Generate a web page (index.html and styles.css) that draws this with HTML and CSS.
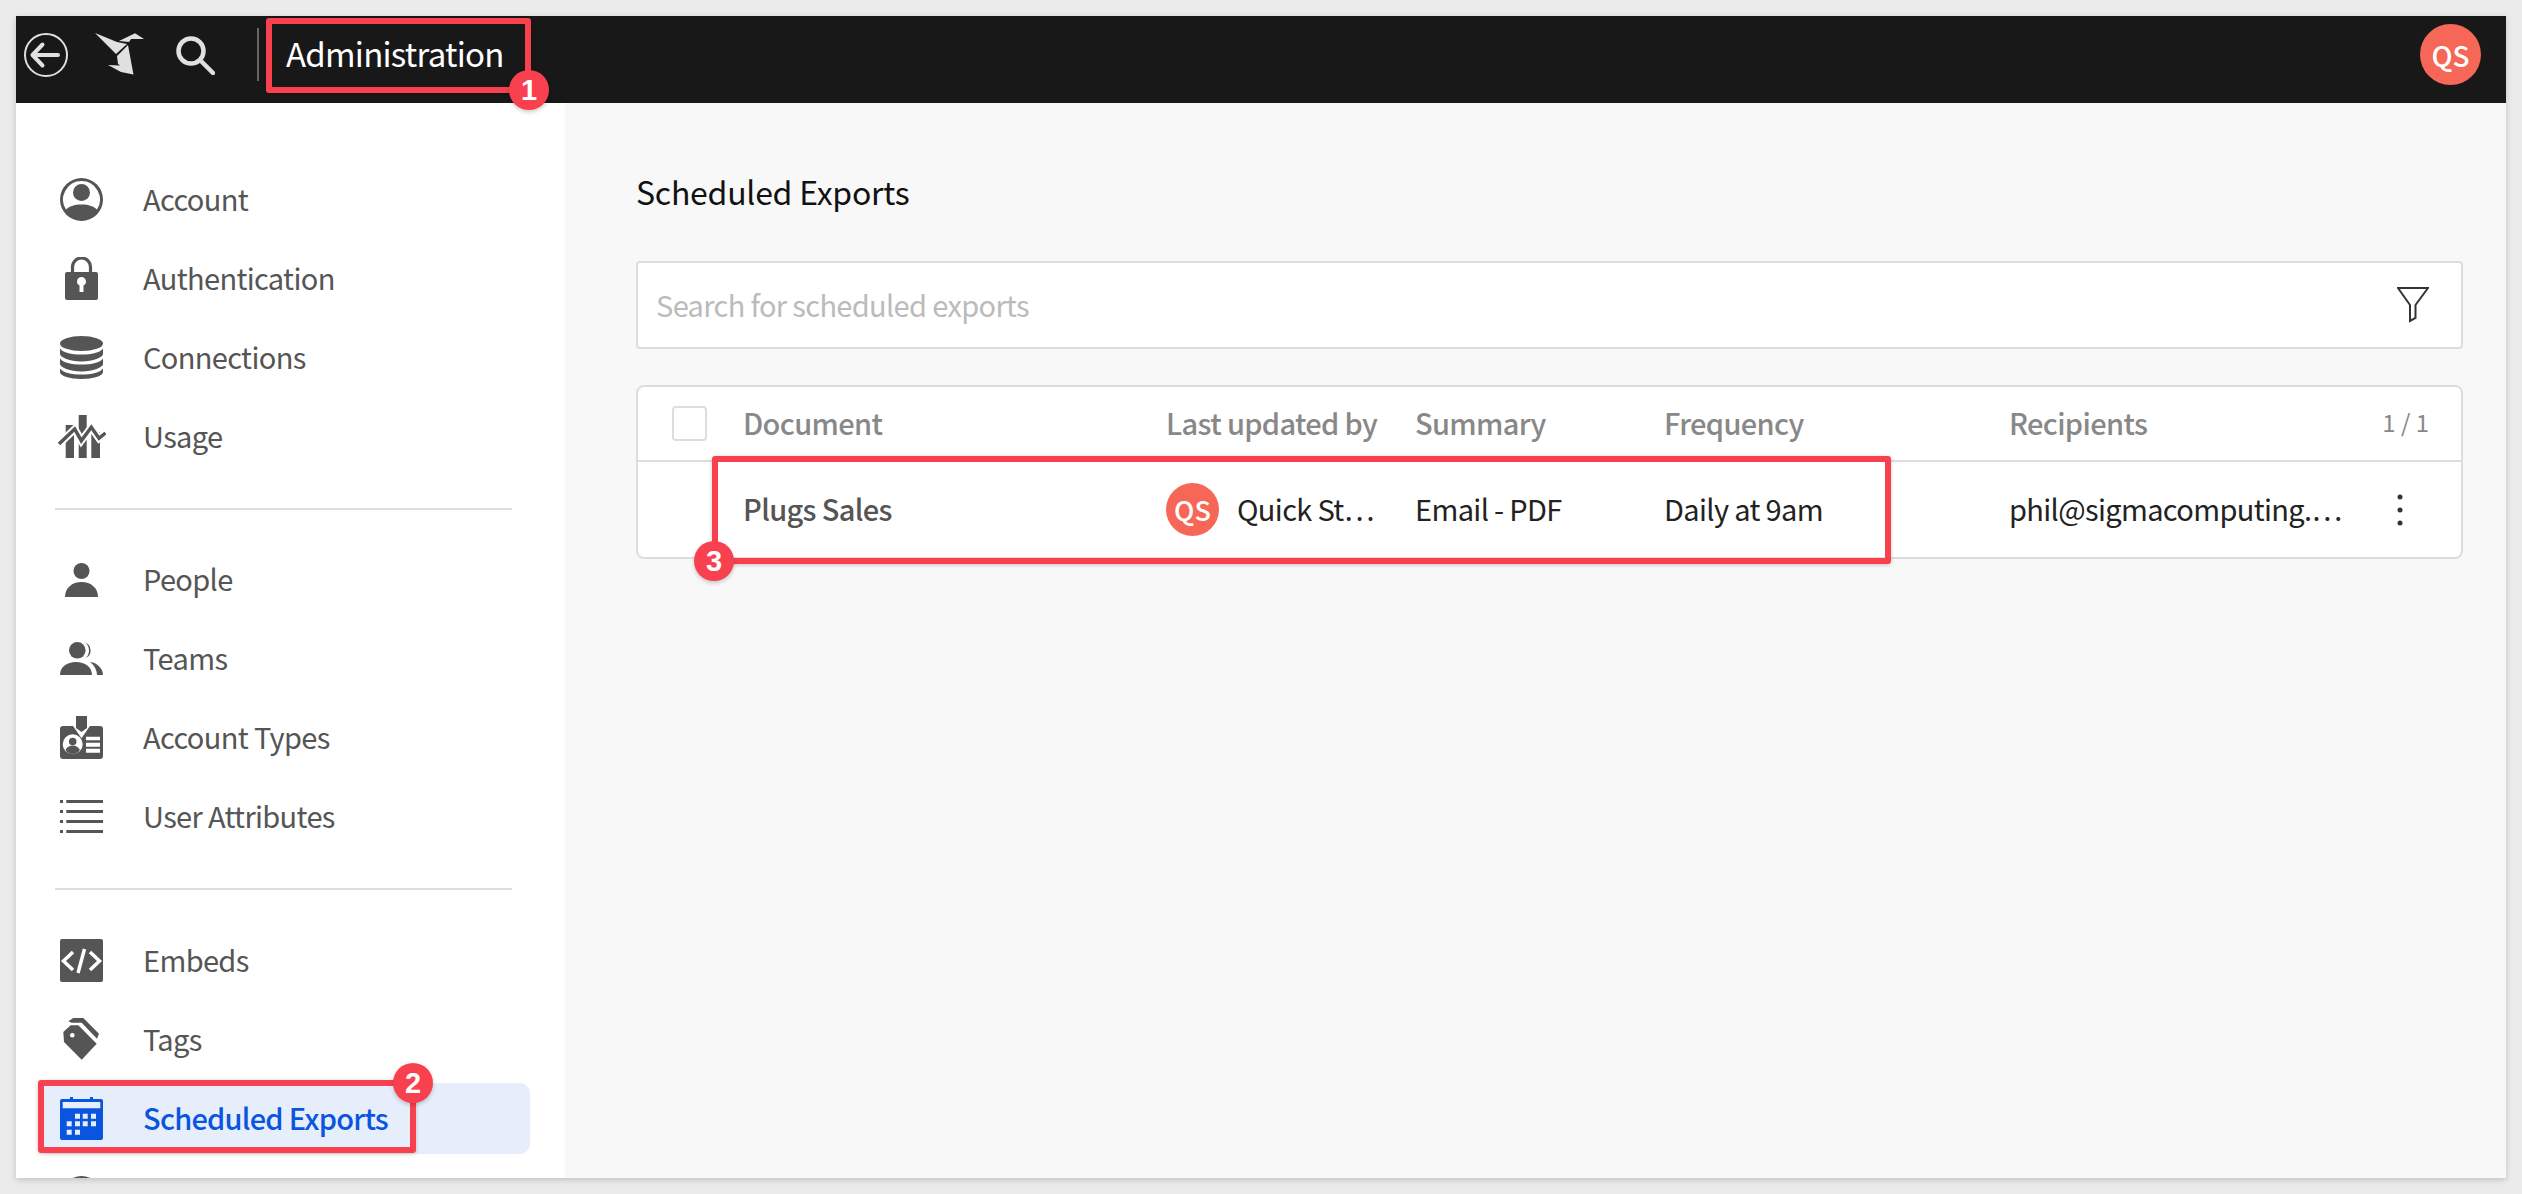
FILE: index.html
```html
<!DOCTYPE html>
<html lang="en">
<head>
<meta charset="utf-8">
<title>Scheduled Exports</title>
<link rel="stylesheet" href="styles.css">
</head>
<body>
<div class="window">
  <header class="topbar">
    <svg class="ico-back" viewBox="0 0 44 44"><circle cx="22" cy="22" r="21"/><path d="M34 22H9M18.500 11.500L8.500 22l10 10.500"/></svg>
    <svg class="ico-logo" viewBox="0 0 49 43"><path d="M0 0l22 9 10 2-11 10zM24 8L40 .3 34 9zM40 .3L49 6H36zM22 23l11-11 5.500 29.700L23 31zM13 32l18 .7 7.300 8.800L26 39z"/></svg>
    <svg class="ico-search" viewBox="0 0 39 40"><circle cx="15" cy="16" r="12.500"/><path d="M25 26l12 12"/></svg>
    <span class="sep"></span>
    <span class="apptitle">Administration</span>
    <span class="avatar avatar-top">QS</span>
  </header>
  <div class="body">
    <nav class="sidebar">
      <ul class="group">
        <li class="item"><svg class="ico" viewBox="0 0 43 43"><path fill-rule="evenodd" d="M21.500 0a21.500 21.500 0 1 0 0 43a21.500 21.500 0 1 0 0-43zM21.500 3a18.500 18.500 0 0 1 15.500 28.500c-3-3-8-5-15.500-5s-12.500 2-15.500 5a18.500 18.500 0 0 1 15.500-28.500z"/><circle cx="21.500" cy="14.500" r="8.500"/></svg><span>Account</span></li>
        <li class="item"><svg class="ico" viewBox="0 0 43 43"><path class="shackle" d="M12.500 16V10a9 9 0 0 1 18 0v6"/><path fill-rule="evenodd" d="M7 15h29a2 2 0 0 1 2 2v24a2 2 0 0 1-2 2H7a2 2 0 0 1-2-2V17a2 2 0 0 1 2-2zM21.500 20a4.500 4.500 0 0 0-2 8.500V35h4v-6.500a4.500 4.500 0 0 0-2-8.500z"/></svg><span>Authentication</span></li>
        <li class="item"><svg class="ico" viewBox="0 0 43 43"><ellipse cx="21.500" cy="7.500" rx="21.500" ry="7.500"/><path d="M0 12.500c3 4 11 6 21.500 6s18.500-2 21.500-6V18c0 3-10 7.500-21.500 7.500S0 21 0 18zM0 22.500c3 4 11 6 21.500 6s18.500-2 21.500-6V28c0 3-10 7.500-21.500 7.500S0 31 0 28zM0 32.500c3 4 11 6 21.500 6s18.500-2 21.500-6V36c0 4-10 7-21.500 7S0 40 0 36z"/></svg><span>Connections</span></li>
        <li class="item"><svg class="ico ico-wide" viewBox="0 0 48 43"><path d="M7.700 10H16v33H7.700zM20.700 0h8v43h-8zM33.300 17H42v26h-8.700z"/><path class="halo" d="M1 29L16.700 14l6.600 11.700 10-13.400L41 23.300 47.500 18"/><path class="line" d="M1 29L16.700 14l6.600 11.700 10-13.400L41 23.300 47.500 18"/></svg><span>Usage</span></li>
      </ul>
      <hr class="rule">
      <ul class="group">
        <li class="item"><svg class="ico ico-people" viewBox="0 0 43 34"><circle cx="21.500" cy="8" r="8"/><path d="M5 34c0-9 7-15 16.500-15S38 25 38 34z"/></svg><span>People</span></li>
        <li class="item"><svg class="ico ico-teams" viewBox="0 0 43 33"><circle cx="17.300" cy="8.300" r="8.300"/><path d="M0 33C0 25 7 20 16 20s16 5 16 13zM25 .5a8.500 8.500 0 0 1 1 15.500c2-2 3-5 3-7.500s-1-6-4-8zM30 20c8 1 13 7 13 13h-6c0-5-3-10-7-13z"/></svg><span>Teams</span></li>
        <li class="item"><svg class="ico" viewBox="0 0 43 43"><path fill-rule="evenodd" d="M3 10h37a3 3 0 0 1 3 3v27a3 3 0 0 1-3 3H3a3 3 0 0 1-3-3V13a3 3 0 0 1 3-3zM26 20.700v3.600h14v-3.600zM26 26.700v4h14v-4zM26 32.700v4h14v-4zM12.700 18.300a10 10 0 1 0 0 20a10 10 0 1 0 0-20z"/><circle cx="12.700" cy="25.500" r="3.800"/><path d="M5.500 34c1.500-3 4-4.500 7.200-4.500s5.700 1.500 7.200 4.500a8.500 8.500 0 0 1-14.400 0z"/><path class="halo-thin" d="M14 6l7.500 11L29 6"/><path d="M16 0h11v12l-5.500 4-5.500-4z"/></svg><span>Account Types</span></li>
        <li class="item"><svg class="ico ico-list" viewBox="0 0 43 33"><path d="M0 0h3v3H0zM6.300 0H43v3H6.300zM0 10h3v3H0zM6.300 10H43v3H6.300zM0 20h3v3H0zM6.300 20H43v3H6.300zM0 30h3v3H0zM6.300 30H43v3H6.300z"/></svg><span>User Attributes</span></li>
      </ul>
      <hr class="rule rule-2">
      <ul class="group">
        <li class="item"><svg class="ico" viewBox="0 0 43 43"><path d="M2 0h39a2 2 0 0 1 2 2v39a2 2 0 0 1-2 2H2a2 2 0 0 1-2-2V2a2 2 0 0 1 2-2z"/><path class="cut" d="M13 13l-9.500 9 9.500 9M30 13l9.500 9-9.500 9M24.500 10L18 34"/></svg><span>Embeds</span></li>
        <li class="item"><svg class="ico" viewBox="0 0 43 43"><path fill-rule="evenodd" d="M3.300 14l7.400-6.700h7.600l18.400 18.400-15 16L4 24zM12.300 15a2.300 2.300 0 1 0 0 4.600a2.300 2.300 0 1 0 0-4.600z"/><path d="M8.300 3.300L13.300 0h10L39 15.700l-2 5L21.700 4.700h-10z"/></svg><span>Tags</span></li>
        <li class="item item-active"><svg class="ico" viewBox="0 0 43 43"><path fill-rule="evenodd" d="M2 2h8V0h3v2h17V0h3v2h8a2 2 0 0 1 2 2v37a2 2 0 0 1-2 2H2a2 2 0 0 1-2-2V4a2 2 0 0 1 2-2zM2.700 5v6.300h37.600V5zM15 16.700v5h5v-5zM22.700 16.700v5h5v-5zM31 16.700v5h5v-5zM6.700 24.300v5h5v-5zM15 24.300v5h5v-5zM22.700 24.300v5h5v-5zM31 24.300v5h5v-5zM6.700 32.700v5h5v-5zM15 32.700v5h5v-5z"/></svg><span>Scheduled Exports</span></li>
        <li class="item"><svg class="ico" viewBox="0 0 43 43"><circle cx="21.500" cy="21.500" r="21.500"/></svg><span></span></li>
      </ul>
    </nav>
    <main class="main">
      <h1 class="title">Scheduled Exports</h1>
      <div class="search">
        <span class="placeholder">Search for scheduled exports</span>
        <svg class="ico-filter" viewBox="0 0 32 36"><path d="M1 1h30L18.500 18v13L13 34V18z"/></svg>
      </div>
      <section class="table">
        <div class="row row-head">
          <span class="check"></span>
          <span>Document</span>
          <span>Last updated by</span>
          <span>Summary</span>
          <span>Frequency</span>
          <span>Recipients</span>
          <span class="count">1 / 1</span>
        </div>
        <div class="row row-body">
          <span></span>
          <span class="docname">Plugs Sales</span>
          <span class="updater"><span class="avatar avatar-row">QS</span><span>Quick St…</span></span>
          <span>Email - PDF</span>
          <span>Daily at 9am</span>
          <span>phil@sigmacomputing.…</span>
          <svg class="ico-kebab" viewBox="0 0 6 32"><circle cx="3" cy="3" r="2.500"/><circle cx="3" cy="16" r="2.500"/><circle cx="3" cy="29" r="2.500"/></svg>
        </div>
      </section>
    </main>
  </div>
</div>
<div class="mark mark-1"></div>
<div class="mark mark-2"></div>
<div class="mark mark-3"></div>
<span class="badge badge-1">1</span>
<span class="badge badge-2">2</span>
<span class="badge badge-3">3</span>
</body>
</html>
```
FILE: styles.css
```css
* { box-sizing: border-box; }
html, body { margin: 0; height: 100%; }
body {
  position: relative;
  padding: 16px;
  height: 1194px;
  overflow: hidden;
  background: #ebebeb;
  font-family: "Noto Sans CJK SC", "Source Sans Pro", "Open Sans", sans-serif;
  font-size: 29px;
  letter-spacing: -0.65px;
  line-height: 40px;
  color: #222;
}
.window {
  display: flex;
  flex-direction: column;
  height: 1162px;
  background: #f8f8f8;
  box-shadow: 0 2px 6px rgba(0,0,0,.18);
  overflow: hidden;
}
.topbar {
  flex: none;
  display: flex;
  align-items: center;
  height: 87px;
  padding: 0 25px 10px 8px;
  background: #181818;
  color: #fff;
}
.ico-back { flex: none; width: 44px; height: 44px; fill: none; stroke: #e0e0e0; stroke-width: 2; }
.ico-back path { stroke-width: 4; stroke-linecap: round; stroke-linejoin: round; }
.ico-logo { flex: none; width: 49px; height: 43px; margin-left: 27px; fill: #e0e0e0; }
.ico-search { flex: none; width: 39px; height: 40px; margin-left: 32px; fill: none; stroke: #e0e0e0; stroke-width: 4.5; stroke-linecap: round; }
.sep { width: 2px; height: 53px; margin-left: 42px; background: #666; }
.apptitle { margin-left: 27px; padding-bottom: 3px; font-size: 33px; letter-spacing: -0.75px; }
.avatar {
  display: flex;
  align-items: center;
  justify-content: center;
  flex: none;
  border-radius: 50%;
  background: #f76757;
  color: #fff;
  letter-spacing: 0;
  font-weight: 500;
}
.avatar-top { width: 61px; height: 61px; margin-left: auto; font-size: 28px; }
.body { flex: 1; display: flex; min-height: 0; }
.sidebar {
  flex: none;
  width: 549px;
  padding: 57px 35px 0 22px;
  background: #fff;
  overflow: hidden;
}
.group { margin: 0; padding: 0; list-style: none; }
.item {
  display: flex;
  align-items: center;
  height: 79px;
  padding-left: 22px;
  border-radius: 10px;
  color: #555;
}
.item span { margin-left: 40px; padding-bottom: 3px; }
.ico { flex: none; width: 43px; height: 43px; fill: #555; }
.ico-wide { width: 48px; margin: 0 -2.5px; }
.ico-people { height: 34px; }
.ico-teams { height: 33px; }
.ico-list { height: 33px; }
.line { fill: none; stroke: #555; stroke-width: 3.5; }
.halo { fill: none; stroke: #fff; stroke-width: 7.5; }
.halo-thin { fill: none; stroke: #fff; stroke-width: 6; }
.cut { fill: none; stroke: #fff; stroke-width: 3.5; }
.shackle { fill: none; stroke: #555; stroke-width: 3.2; }
.item-active { height: 71px; margin: 4px 0; background: #e6eefb; color: #0a55e0; font-weight: 500; letter-spacing: -0.75px; }
.item-active .ico { fill: #0a55e0; }
.rule { height: 2px; margin: 32px 18px 30px 17px; border: 0; background: #ddd; }
.rule-2 { margin-top: 32px; margin-bottom: 31px; }
.main { flex: 1; min-width: 0; padding: 68px 43px 0 71px; }
.title { margin: 0 0 50px; font-size: 32px; letter-spacing: -0.25px; font-weight: 400; line-height: 40px; color: #111; }
.search {
  display: flex;
  align-items: center;
  justify-content: space-between;
  height: 88px;
  padding: 0 32px 0 18px;
  background: #fff;
  border: 2px solid #ddd;
  border-radius: 4px;
}
.placeholder { padding-bottom: 3px; color: #bbb; }
.ico-filter { width: 32px; height: 36px; fill: none; stroke: #333; stroke-width: 2; }
.table {
  margin-top: 36px;
  background: #fff;
  border: 2px solid #ddd;
  border-radius: 8px;
}
.row {
  display: grid;
  grid-template-columns: 105px 423px 249px 249px 345px 1fr;
  align-items: center;
}
.row-head { position: relative; height: 75px; border-bottom: 2px solid #ddd; color: #888; font-weight: 500; }
.row-head > span { padding-bottom: 3px; }
.row-body { position: relative; height: 95px; }
.row-body > span { padding-bottom: 4px; }
.row-head > .check {
  justify-self: start;
  width: 35px;
  height: 35px;
  margin-left: 34px;
  padding: 0;
  border: 2px solid #ddd;
  border-radius: 4px;
}
.row-head > .count { position: absolute; right: 32px; font-size: 24px; font-weight: 400; letter-spacing: 0; color: #888; }
.docname { font-weight: 500; color: #555; }
.row-body > .updater { display: flex; align-items: center; gap: 18px; padding-bottom: 0; }
.updater > span:last-child { padding-bottom: 4px; }
.avatar-row { width: 53px; height: 53px; font-size: 27px; }
.ico-kebab { position: absolute; left: 1759px; width: 6px; height: 32px; fill: #333; }
.mark {
  position: absolute;
  border: 6px solid #f9404e;
  border-radius: 3px;
  box-shadow: 0 1px 4px rgba(0,0,0,.2);
}
.mark-1 { left: 266px; top: 18px; width: 265px; height: 75px; }
.mark-2 { left: 38px; top: 1080px; width: 378px; height: 73px; }
.mark-3 { left: 712px; top: 456px; width: 1179px; height: 108px; }
.badge {
  position: absolute;
  width: 40px;
  height: 40px;
  border-radius: 50%;
  background: #f9404e;
  color: #fff;
  font-family: "Liberation Sans", Arial, sans-serif;
  font-size: 29px;
  font-weight: 700;
  letter-spacing: 0;
  line-height: 40px;
  text-align: center;
  box-shadow: 0 2px 4px rgba(0,0,0,.2);
}
.badge-1 { left: 509px; top: 70px; }
.badge-2 { left: 393px; top: 1063px; }
.badge-3 { left: 694px; top: 541px; }
```
